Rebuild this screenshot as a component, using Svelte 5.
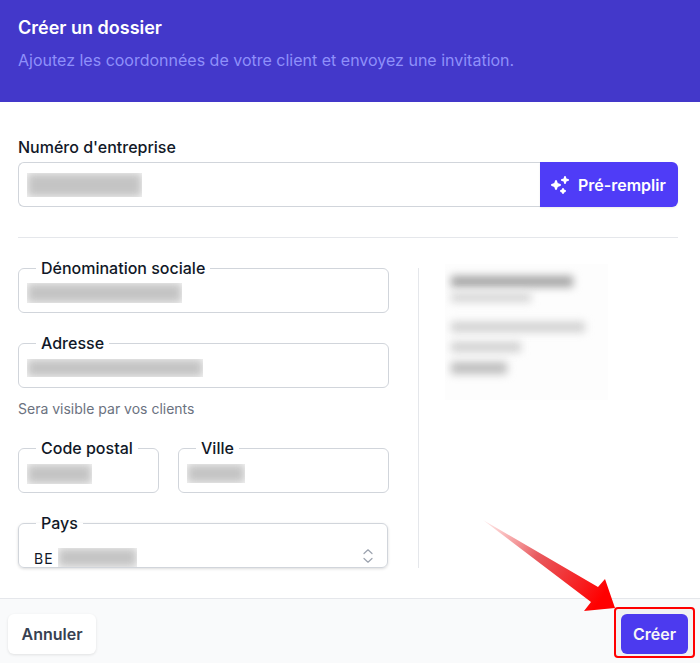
<script>
  // blurred-out client data, as bars in px: left, top, width, height, shade
  const previewLines = [
    [6, 12, 122, 11, '#a3a3a3'],
    [6, 29, 80, 9, '#d4d4d4'],
    [6, 58, 134, 10, '#cfcfcf'],
    [6, 78, 70, 10, '#cfcfcf'],
    [6, 98, 56, 12, '#bdbdbd']
  ]
</script>

<div class="page">
  <header class="head">
    <h1>Créer un dossier</h1>
    <p>Ajoutez les coordonnées de votre client et envoyez une invitation.</p>
  </header>

  <main class="body">
    <div class="label">Numéro d'entreprise</div>
    <div class="vat-row">
      <div class="vat-input">
        <span class="patch vat"><i></i></span>
      </div>
      <button class="btn-fill">
        <svg width="20" height="20" viewBox="0 0 20 20" fill="currentColor" aria-hidden="true">
          <path d="M15.98 1.804a1 1 0 0 0-1.96 0l-.24 1.192a1 1 0 0 1-.784.785l-1.192.238a1 1 0 0 0 0 1.962l1.192.238a1 1 0 0 1 .785.785l.238 1.192a1 1 0 0 0 1.962 0l.238-1.192a1 1 0 0 1 .785-.785l1.192-.238a1 1 0 0 0 0-1.962l-1.192-.238a1 1 0 0 1-.785-.785l-.238-1.192ZM6.949 5.684a1 1 0 0 0-1.898 0l-.683 2.051a1 1 0 0 1-.633.633l-2.051.683a1 1 0 0 0 0 1.898l2.051.684a1 1 0 0 1 .633.632l.683 2.051a1 1 0 0 0 1.898 0l.683-2.051a1 1 0 0 1 .633-.633l2.051-.683a1 1 0 0 0 0-1.897l-2.051-.683a1 1 0 0 1-.633-.633L6.95 5.684ZM13.949 13.684a1 1 0 0 0-1.898 0l-.184.551a1 1 0 0 1-.632.633l-.551.183a1 1 0 0 0 0 1.898l.551.183a1 1 0 0 1 .633.633l.183.551a1 1 0 0 0 1.898 0l.184-.551a1 1 0 0 1 .632-.633l.551-.183a1 1 0 0 0 0-1.898l-.551-.184a1 1 0 0 1-.633-.632l-.183-.551Z"/>
        </svg>
        Pré-remplir
      </button>
    </div>

    <hr class="rule" />

    <div class="columns">
      <div class="form">
        <fieldset class="field">
          <legend>Dénomination sociale</legend>
          <span class="patch name"><i></i></span>
        </fieldset>

        <div class="address">
          <fieldset class="field">
            <legend>Adresse</legend>
            <span class="patch street"><i></i></span>
          </fieldset>
          <p class="hint">Sera visible par vos clients</p>
        </div>

        <div class="city-row">
          <fieldset class="field">
            <legend>Code postal</legend>
            <span class="patch zip"><i></i></span>
          </fieldset>
          <fieldset class="field">
            <legend>Ville</legend>
            <span class="patch city"><i></i></span>
          </fieldset>
        </div>

        <fieldset class="field country">
          <legend>Pays</legend>
          <span class="code">BE</span>
          <span class="patch land"><i></i></span>
          <svg class="updown" width="16" height="16" viewBox="0 0 16 16" fill="none" stroke="currentColor" stroke-width="1.2" stroke-linecap="round" stroke-linejoin="round" aria-hidden="true">
            <path d="M4 5.5 8 1.8l4 3.7M4 10.5l4 3.7 4-3.7"/>
          </svg>
        </fieldset>
      </div>

      <div class="split"></div>

      <aside class="preview">
        {#each previewLines as [x, y, w, h, c]}
          <i style="left:{x}px;top:{y}px;width:{w}px;height:{h}px;background:{c}"></i>
        {/each}
      </aside>
    </div>
  </main>

  <footer class="foot">
    <button class="btn-cancel">Annuler</button>
    <button class="btn-create">Créer</button>
  </footer>

  <!-- annotation drawn over the screenshot -->
  <div class="mark"></div>
  <svg class="arrow" width="700" height="663" viewBox="0 0 700 663" aria-hidden="true">
    <defs>
      <linearGradient id="fade" gradientUnits="userSpaceOnUse" x1="484" y1="521" x2="600" y2="600">
        <stop offset="0" stop-color="#f87171" stop-opacity="0.15"/>
        <stop offset="0.45" stop-color="#e5484d" stop-opacity="0.9"/>
        <stop offset="1" stop-color="#ff0000"/>
      </linearGradient>
    </defs>
    <polygon points="483,520 598,587 605,579 615,608 584,611 591,602" fill="url(#fade)"/>
  </svg>
</div>

<style>
  :global(body) {
    margin: 0;
    background: #fff;
  }

  .page {
    position: relative;
    width: 700px;
    height: 663px;
    overflow: hidden;
    font-family: Inter, "Liberation Sans", sans-serif;
    color: #111827;
  }

  .head {
    height: 102px;
    box-sizing: border-box;
    padding: 16px 18px 0;
    background: #4338ca;
  }

  .head h1 {
    margin: 0;
    font-size: 18px;
    line-height: 24px;
    font-weight: 600;
    color: #fff;
  }

  .head p {
    margin: 8px 0 0;
    font-size: 16px;
    line-height: 24px;
    color: #8f90fa;
  }

  .body {
    padding: 33px 22px 0 18px;
  }

  .label {
    font-size: 16px;
    line-height: 24px;
    font-weight: 500;
    margin-bottom: 3px;
  }

  .vat-row {
    display: flex;
    height: 45px;
  }

  .vat-input {
    flex: 1;
    box-sizing: border-box;
    border: 1px solid #d1d5db;
    border-right: none;
    border-radius: 6px 0 0 6px;
    padding: 10px 8px;
  }

  .btn-fill {
    display: flex;
    align-items: center;
    gap: 8px;
    width: 138px;
    padding: 0 0 0 10px;
    border: none;
    border-radius: 0 6px 6px 0;
    background: #4f3cf7;
    color: #fff;
    font: 600 16px/24px Inter, "Liberation Sans", sans-serif;
    box-shadow: 0 1px 2px rgba(0, 0, 0, 0.08);
  }

  .rule {
    margin: 30px 0 18px;
    border: none;
    border-top: 1px solid #e5e7eb;
  }

  .columns {
    display: flex;
  }

  .form {
    width: 371px;
    display: flex;
    flex-direction: column;
    gap: 18px;
  }

  .field {
    position: relative;
    box-sizing: border-box;
    height: 57px;
    min-width: 0;
    margin: 0;
    padding: 0 8px;
    border: 1px solid #d1d5db;
    border-radius: 6px;
  }

  .field legend {
    margin-left: 9px;
    padding: 0 5px;
    font-size: 16px;
    line-height: 24px;
    font-weight: 500;
    color: #111827;
  }

  .address {
    display: flex;
    flex-direction: column;
  }

  .hint {
    margin: 11px 0 0;
    font-size: 14px;
    line-height: 20px;
    color: #6b7280;
  }

  .city-row {
    display: grid;
    grid-template-columns: 141px 211px;
    gap: 19px;
    margin-top: -1px;
  }

  .country {
    width: 370px;
    display: block;
    box-shadow: 0 1px 3px rgba(0, 0, 0, 0.14);
    clip-path: none;
  }

  .code {
    position: absolute;
    left: 15px;
    top: 14px;
    font-size: 14px;
    line-height: 20px;
    letter-spacing: 1px;
  }

  .updown {
    position: absolute;
    right: 11px;
    top: 13px;
    color: #9ca3af;
  }

  .patch {
    display: block;
    overflow: hidden;
    background: #fafafa;
  }

  .patch i {
    display: block;
    height: 100%;
    background: #c4c4c4;
    filter: blur(4px);
  }

  .vat {
    width: 115px;
    height: 24px;
  }

  .name {
    width: 155px;
    height: 20px;
    margin-top: 3px;
  }

  .street {
    width: 176px;
    height: 18px;
    margin-top: 4px;
  }

  .zip {
    width: 65px;
    height: 20px;
    margin-top: 4px;
  }

  .city {
    width: 58px;
    height: 19px;
    margin-top: 4px;
  }

  .land {
    position: absolute;
    left: 39px;
    top: 13px;
    width: 79px;
    height: 19px;
  }

  .split {
    width: 1px;
    margin: 12px 26px 0 29px;
    background: #e5e7eb;
  }

  .preview {
    position: relative;
    width: 163px;
    height: 136px;
    margin-top: 8px;
    background: #fdfdfd;
    overflow: hidden;
  }

  .preview i {
    position: absolute;
    filter: blur(4px);
  }

  .foot {
    position: absolute;
    left: 0;
    right: 0;
    bottom: 0;
    height: 65px;
    box-sizing: border-box;
    display: flex;
    justify-content: space-between;
    padding: 15px 12px 0 8px;
    background: #f9fafb;
    border-top: 1px solid #e5e7eb;
  }

  .foot button {
    height: 40px;
    border: none;
    border-radius: 6px;
    font: 600 16px/24px Inter, "Liberation Sans", sans-serif;
  }

  .btn-cancel {
    width: 88px;
    background: #fff;
    color: #374151;
    box-shadow: 0 1px 3px rgba(0, 0, 0, 0.1);
  }

  .btn-create {
    width: 67px;
    background: #4f3cf7;
    color: #fff;
  }

  .mark {
    position: absolute;
    left: 614px;
    top: 607px;
    width: 81px;
    height: 51px;
    box-sizing: border-box;
    border: 2px solid #f00;
    border-radius: 4px;
    background: rgba(0, 0, 0, 0.03);
  }

  .arrow {
    position: absolute;
    left: 0;
    top: 0;
    pointer-events: none;
  }
</style>
